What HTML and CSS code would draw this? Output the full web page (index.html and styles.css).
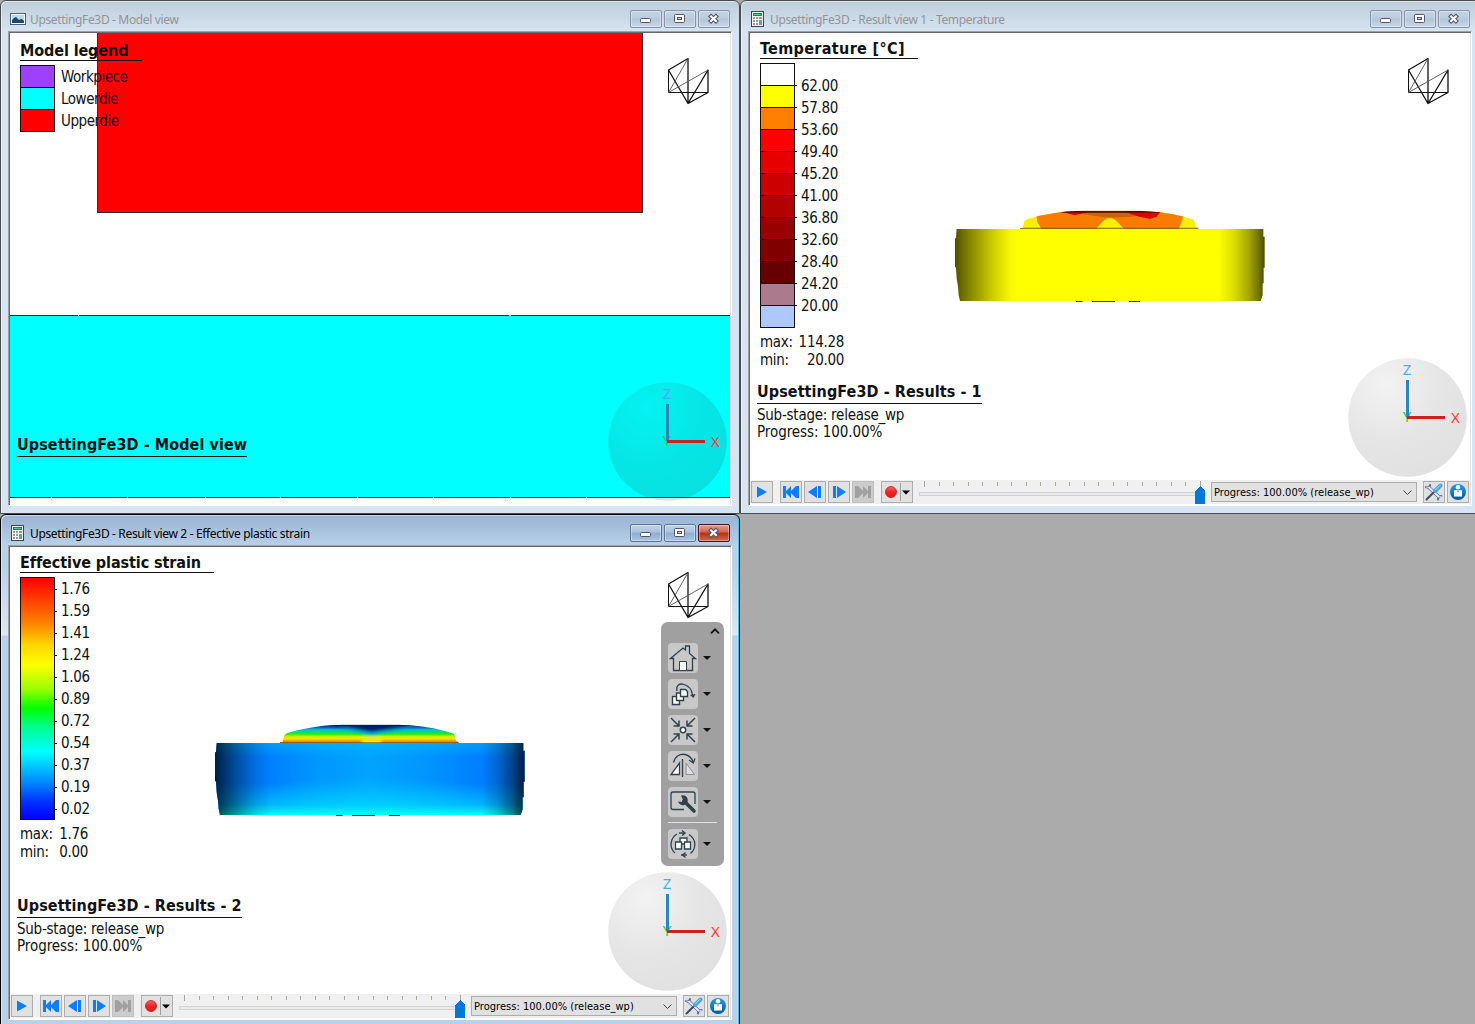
FILE: index.html
```html
<!DOCTYPE html>
<html lang="en">
<head>
<meta charset="utf-8">
<title>UpsettingFe3D</title>
<link rel="stylesheet" href="styles.css">
</head>
<body>
<svg class="defs" width="0" height="0" aria-hidden="true">
  <defs>
    <radialGradient id="ballShade" cx=".32" cy=".22" r=".8">
      <stop offset="0" stop-color="#3c3c3c" stop-opacity=".065"/>
      <stop offset=".6" stop-color="#323232" stop-opacity=".125"/>
      <stop offset="1" stop-color="#323232" stop-opacity=".145"/>
    </radialGradient>
    <linearGradient id="yellowBody">
      <stop offset="0" stop-color="#4c4c00"/><stop offset=".025" stop-color="#6e6e00"/><stop offset=".07" stop-color="#9a9a00"/>
      <stop offset=".12" stop-color="#cccc00"/><stop offset=".18" stop-color="#f8f800"/><stop offset=".2" stop-color="#ff0"/>
      <stop offset=".85" stop-color="#ff0"/><stop offset=".9" stop-color="#dede00"/><stop offset=".95" stop-color="#a4a400"/>
      <stop offset=".98" stop-color="#747400"/><stop offset="1" stop-color="#4c4c00"/>
    </linearGradient>
    <linearGradient id="blueBody">
      <stop offset="0" stop-color="#0078ff"/><stop offset=".18" stop-color="#0080ff"/><stop offset=".32" stop-color="#0096ff"/><stop offset=".5" stop-color="#00a4ff"/>
      <stop offset=".68" stop-color="#0096ff"/><stop offset=".84" stop-color="#0080ff"/><stop offset="1" stop-color="#0078ff"/>
    </linearGradient>
    <linearGradient id="cyanFoot" x2="0" y2="1">
      <stop offset="0" stop-color="#00c8ff" stop-opacity=".4"/><stop offset=".2" stop-color="#00c8ff" stop-opacity="0"/>
      <stop offset=".55" stop-color="#00d0ff" stop-opacity="0"/><stop offset=".85" stop-color="#00dcff" stop-opacity=".5"/><stop offset="1" stop-color="#00fff4"/>
    </linearGradient>
    <linearGradient id="edgeShade">
      <stop offset="0" stop-opacity=".75"/><stop offset=".03" stop-opacity=".57"/><stop offset=".08" stop-opacity=".32"/><stop offset=".13" stop-opacity=".12"/>
      <stop offset=".18" stop-opacity="0"/><stop offset=".86" stop-opacity="0"/><stop offset=".91" stop-opacity=".16"/><stop offset=".96" stop-opacity=".44"/><stop offset="1" stop-opacity=".78"/>
    </linearGradient>
    <linearGradient id="strainDome" x2="0" y2="1">
      <stop offset="0" stop-color="#002064"/><stop offset=".15" stop-color="#0058b8"/><stop offset=".28" stop-color="#00b8e0"/><stop offset=".42" stop-color="#00e070"/>
      <stop offset=".53" stop-color="#38ec00"/><stop offset=".66" stop-color="#d0f000"/><stop offset=".78" stop-color="#ffe000"/><stop offset=".9" stop-color="#ff9000"/><stop offset="1" stop-color="#d06800"/>
    </linearGradient>
    <radialGradient id="footGlow"><stop offset="0" stop-color="#00e0ff" stop-opacity=".7"/><stop offset=".5" stop-color="#00d8ff" stop-opacity=".35"/><stop offset="1" stop-color="#00d0ff" stop-opacity="0"/></radialGradient>
    <filter id="soft" x="-20%" y="-50%" width="140%" height="200%"><feGaussianBlur stdDeviation="5"/></filter>
    <path id="bodyShape" d="M50 102H970V125H974V218H971V265H968V300L962 318H60L56 300L54 275L50 250L48 218L45 215V130H48Z"/>
    <path id="domeShape" d="M240 102V99H248L253 78L262 72L295 63L340 55L365 51L425 47H597L660 52L700 58L735 66L762 74L768 95L776 99V102Z"/>
    <clipPath id="domeClip"><use href="#domeShape"/></clipPath>
    <clipPath id="bodyClip"><use href="#bodyShape"/></clipPath>
    <linearGradient id="recGrad" x2="0" y2="1"><stop offset="0" stop-color="#f46a6a"/><stop offset=".5" stop-color="#ee2424"/><stop offset="1" stop-color="#e01c1c"/></linearGradient>
    <linearGradient id="infoGrad" x2="0" y2="1"><stop offset="0" stop-color="#2d9bdc"/><stop offset="1" stop-color="#005a9e"/></linearGradient>
  </defs>
  <symbol id="i-picture" viewBox="0 0 16 12"><path fill="#4d5f70" d="M0 0h16v12H0z"/><path fill="#fff" d="M1 1h14v10H1z"/><path fill="#bcd8ee" d="M2 2h12v8H2z"/><path fill="#24456b" d="M2 7l2-2 2-1 3 3 2-1 1 0 2 2v2H2z"/></symbol>
  <symbol id="i-calc" viewBox="0 0 13 16"><path fill="#444" d="M0 0h13v16H0z"/><path fill="#f8f8f8" d="M1 1h11v14H1z"/><path fill="#118a50" d="M2 2h9v3H2z"/><path fill="#5cc795" d="M3 3h7v1H3z"/><path fill="#999" d="M2 6h2v2H2zM5 6h2v2H5zM2 9h2v2H2zM5 9h2v2H5zM2 12h2v2H2zM5 12h2v2H5z"/><path fill="#ff7a20" d="M8 6h3v2H8z"/><path fill="#5c9cd8" d="M8 9h3v5H8z"/></symbol>
  <symbol id="i-min" viewBox="0 0 32 18"><rect x="10.5" y="8.5" width="10" height="4" rx="1" fill="#fff" stroke="#53546a"/></symbol>
  <symbol id="i-max" viewBox="0 0 32 18"><rect x="10.5" y="4.5" width="10" height="8" rx="1" fill="#fff" stroke="#53546a"/><rect x="13.5" y="7.5" width="4" height="2" fill="#c3d3e6" stroke="#53546a"/></symbol>
  <symbol id="i-close" viewBox="0 0 32 18"><path d="M11.500 5l8 7.500M19.500 5l-8 7.500" stroke="#53546a" stroke-width="4.400"/><path d="M12.300 5.700l6.400 6M18.700 5.700l-6.400 6" stroke="#fff" stroke-width="2.200"/></symbol>
  <symbol id="i-logo" viewBox="0 0 42 48"><g fill="none" stroke="#111" stroke-linejoin="round"><path stroke-width="1.300" d="M1.500 13L21 1.500V46.500zM21 46.500L41 13V35.500z"/><path stroke-width="1" d="M1.500 13V35.500H41"/><path stroke="#555" stroke-width=".9" d="M1.500 35.500L21 1.500M1.500 35.500L41 13"/></g></symbol>
  <symbol id="i-play" viewBox="0 0 22 22"><path fill="#107cf8" d="M6 5.500L16 11L6 16.500z"/></symbol>
  <symbol id="i-first" viewBox="0 0 22 22"><path fill="currentColor" d="M3 5h3v5l5-5v5l5-5h3v12h-3l-5-5v5l-5-5v5H3z"/></symbol>
  <symbol id="i-prev" viewBox="0 0 22 22"><path fill="#107cf8" d="M4 11L13 5v12zM14 5h3v12h-3z"/></symbol>
  <symbol id="i-caret" viewBox="0 0 8 4"><path fill="#111" d="M0 0h8L4 4z"/></symbol>
  <symbol id="i-tools" viewBox="0 0 22 22"><g fill="none" stroke-linecap="round"><path d="M6 6.500L15.500 15.500" stroke="#5566ae" stroke-width="3.200"/><path d="M3 6l3 1 1-3M18.500 15l-3 .5-.5 3" stroke="#5566ae" stroke-width="2"/><path d="M6 6.500L15.500 15.500" stroke="#eef" stroke-width="1.800"/><path d="M3.500 6l2.700 .800M15.800 16l2.500-.6" stroke="#eef" stroke-width=".8"/><path d="M3.500 18.500L11 11" stroke="#3e4860" stroke-width="2"/><path d="M12 10L17.500 4.500" stroke="#4ba5e4" stroke-width="4"/><path d="M12.500 8.800l4.500-4.500" stroke="#a9dcff" stroke-width="1"/></g></symbol>
  <symbol id="i-info" viewBox="0 0 22 22"><circle cx="11" cy="11" r="8" fill="url(#infoGrad)"/><circle cx="11" cy="6.300" r="2.200" fill="#fff"/><path fill="#fff" d="M7 9.200h8v6.300H7z"/><path fill="#2b86c4" d="M10.500 9.200h1v2h-1z"/></symbol>
</svg>

<main class="desktop">
  <section class="window">
    <header class="titlebar">
      <svg class="ico-picture"><use href="#i-picture"/></svg><h1 class="caption">UpsettingFe3D - Model view</h1>
      <div class="controls"><button class="ctl"><svg><use href="#i-min"/></svg></button><button class="ctl"><svg><use href="#i-max"/></svg></button><button class="ctl"><svg><use href="#i-close"/></svg></button></div>
    </header>
    <div class="frame">
      <div class="viewport">
        <svg class="scene" viewBox="0 0 720 471" shape-rendering="crispEdges">
          <path fill="#f00" d="M87 0h546v180H87z"/><path fill="none" stroke="#40282c" d="M87.500 0V179.500H632.500V0"/>
          <path fill="#0ff" d="M0 282h720v183H0z"/>
          <path stroke="#134" d="M0 282.500H68M69 282.500H499M501 282.500H720M0 464.500H41M42 464.500H117M118 464.500H195M196 464.500H270M271 464.500H347M348 464.500H423M424 464.500H500M501 464.500H576M577 464.500H720"/>
        </svg>
        <div class="legend legend-model">
          <h2 class="legend-title">Model legend</h2>
          <ul class="swatches">
            <li><i class="sw violet"></i><span>Workpiece</span></li>
            <li><i class="sw cyan"></i><span>Lowerdie</span></li>
            <li><i class="sw red"></i><span>Upperdie</span></li>
          </ul>
        </div>
        <div class="info info-model"><h2>UpsettingFe3D - Model view</h2></div>
        <svg class="logo"><use href="#i-logo"/></svg>
        <svg class="triad" viewBox="0 0 120 120"><circle cx="59.500" cy="60.500" r="59.300" fill="url(#ballShade)"/><text class="axis" x="59" y="65" fill="#2fd02f">Y</text><path d="M59.500 23V60" stroke="#2a86c0" stroke-width="3"/><path d="M59 60.500H97" stroke="#cf2020" stroke-width="3"/><text class="axis" x="59" y="17.500" fill="#42b0ff">Z</text><text class="axis" x="107.500" y="65.500" fill="#ff3a3a">X</text></svg>
      </div>
    </div>
  </section>

  <section class="window">
    <header class="titlebar">
      <svg class="ico-calc"><use href="#i-calc"/></svg><h1 class="caption">UpsettingFe3D - Result view 1 - Temperature</h1>
      <div class="controls"><button class="ctl"><svg><use href="#i-min"/></svg></button><button class="ctl"><svg><use href="#i-max"/></svg></button><button class="ctl"><svg><use href="#i-close"/></svg></button></div>
    </header>
    <div class="frame">
      <div class="viewport">
        <svg class="scene" viewBox="0 0 720 447">
          <g transform="translate(190 162) scale(.33333)">
            <use href="#bodyShape" fill="url(#yellowBody)"/>
            <g clip-path="url(#domeClip)">
              <path fill="#f8f000" d="M230 40H790V110H230z"/>
              <path fill="#f87c00" d="M285 40L292 80L304 102H468L488 80Q509 58 532 80L552 102H716L730 66L740 40z"/>
              <path fill="#8a3c10" opacity=".4" d="M430 47H600V62Q515 74 430 58z"/>
              <path fill="#e00000" d="M365 47H445L440 53L405 61L385 56zM555 51H660L650 65L630 71L600 66z"/>
              <path fill="#640008" d="M365 45H660V53H600L560 53L440 53L365 53z"/>
              <path fill="#6a5a00" opacity=".7" d="M240 98H776V102H240z"/>
            </g>
            <path fill="#504800" d="M408 318h20v3h-20zM456 318h69v3h-69zM567 318h33v3h-33z"/>
          </g>
        </svg>
        <div class="legend">
          <h2 class="legend-title title-temp">Temperature [°C]</h2>
          <ul class="scale">
            <li><i class="sw t0"></i><span>62.00</span></li><li><i class="sw t1"></i><span>57.80</span></li>
            <li><i class="sw t2"></i><span>53.60</span></li><li><i class="sw t3"></i><span>49.40</span></li>
            <li><i class="sw t4"></i><span>45.20</span></li><li><i class="sw t5"></i><span>41.00</span></li>
            <li><i class="sw t6"></i><span>36.80</span></li><li><i class="sw t7"></i><span>32.60</span></li>
            <li><i class="sw t8"></i><span>28.40</span></li><li><i class="sw t9"></i><span>24.20</span></li>
            <li><i class="sw t10"></i><span>20.00</span></li><li><i class="sw t11"></i></li>
          </ul>
          <dl class="range range-temp"><dt>max:</dt><dd>114.28</dd><dt>min:</dt><dd>20.00</dd></dl>
        </div>
        <div class="info"><h2>UpsettingFe3D - Results - 1</h2><p>Sub-stage: release_wp</p><p class="progress">Progress: 100.00%</p></div>
        <svg class="logo"><use href="#i-logo"/></svg>
        <svg class="triad" viewBox="0 0 120 120"><circle cx="59.500" cy="60.500" r="59.300" fill="url(#ballShade)"/><text class="axis" x="59" y="65" fill="#2fd02f">Y</text><path d="M59.500 23V60" stroke="#2a86c0" stroke-width="3"/><path d="M59 60.500H97" stroke="#cf2020" stroke-width="3"/><text class="axis" x="59" y="17.500" fill="#42b0ff">Z</text><text class="axis" x="107.500" y="65.500" fill="#ff3a3a">X</text></svg>
      </div>
      <footer class="player">
        <button class="pb play"><svg><use href="#i-play"/></svg></button>
        <button class="pb"><svg><use href="#i-first"/></svg></button><button class="pb"><svg><use href="#i-prev"/></svg></button>
        <button class="pb flip"><svg><use href="#i-prev"/></svg></button><button class="pb flip off"><svg><use href="#i-first"/></svg></button>
        <button class="rec"><svg viewBox="0 0 32 22"><circle cx="10" cy="11" r="5.500" fill="url(#recGrad)" stroke="#c41818" stroke-width=".8"/><path stroke="#a0a0a0" d="M19.500 2v18"/><path d="M21 9.500h8l-4 4z"/></svg></button>
        <svg class="slider" viewBox="0 0 290 24"><path fill="#e7eaea" stroke="#d0d3d3" d="M.5 12.500H286V15.500H.5z"/><path class="ticks" d="M5.500 1v6M20.500 2v4M34.500 2v4M49.500 2v4M63.500 2v4M78.500 2v4M92.500 2v4M107.500 2v4M121.500 2v4M136.500 2v4M150.500 2v4M165.500 2v4M179.500 2v4M194.500 2v4M208.500 2v4M223.500 2v4M237.500 2v4M252.500 2v4M266.500 2v4M281.500 1v6"/><path fill="#0078d7" d="M276 24V11L281 6L286 11V24z"/></svg>
        <div class="combo"><span>Progress: 100.00% (release_wp)</span><svg viewBox="0 0 9 5"><path d="M.5.5l4 4 4-4" fill="none" stroke="#444"/></svg></div>
        <button class="pb tools"><svg><use href="#i-tools"/></svg></button><button class="pb"><svg><use href="#i-info"/></svg></button>
      </footer>
    </div>
  </section>

  <section class="window active">
    <header class="titlebar">
      <svg class="ico-calc"><use href="#i-calc"/></svg><h1 class="caption">UpsettingFe3D - Result view 2 - Effective plastic strain</h1>
      <div class="controls"><button class="ctl"><svg><use href="#i-min"/></svg></button><button class="ctl"><svg><use href="#i-max"/></svg></button><button class="ctl close"><svg><use href="#i-close"/></svg></button></div>
    </header>
    <div class="frame">
      <div class="viewport">
        <svg class="scene" viewBox="0 0 720 447">
          <g transform="translate(190 162) scale(.33333)">
            <use href="#bodyShape" fill="url(#blueBody)"/>
            <g clip-path="url(#bodyClip)">
              <ellipse cx="510" cy="330" rx="480" ry="130" fill="url(#footGlow)"/>
            </g>
            <use href="#bodyShape" fill="url(#cyanFoot)"/>
            <use href="#bodyShape" fill="url(#edgeShade)"/>
            <g clip-path="url(#domeClip)">
              <path fill="url(#strainDome)" d="M230 46H790V102H230z"/>
              <g filter="url(#soft)">
                <path fill="#00b4d8" d="M380 40H680L600 64L515 80L450 66z"/>
                <path fill="#00226c" d="M330 40H690L600 58L515 70L460 60z"/>
                <path fill="#f0e800" d="M485 84h60v22h-60z"/>
              </g>
              <path fill="#001c58" d="M365 45H660V50H365z"/>
              <path fill="#5a5a00" opacity=".6" d="M240 99H776V102H240z"/>
            </g>
            <path fill="#003850" d="M408 318h20v3h-20zM456 318h69v3h-69zM567 318h33v3h-33z"/>
          </g>
        </svg>
        <div class="legend">
          <h2 class="legend-title title-strain">Effective plastic strain</h2>
          <div class="ramp-row">
            <i class="ramp"></i>
            <ul class="ramp-labels"><li>1.76</li><li>1.59</li><li>1.41</li><li>1.24</li><li>1.06</li><li>0.89</li><li>0.72</li><li>0.54</li><li>0.37</li><li>0.19</li><li>0.02</li></ul>
          </div>
          <dl class="range range-strain"><dt>max:</dt><dd>1.76</dd><dt>min:</dt><dd>0.00</dd></dl>
        </div>
        <div class="info"><h2>UpsettingFe3D - Results - 2</h2><p>Sub-stage: release_wp</p><p class="progress">Progress: 100.00%</p></div>
        <svg class="logo"><use href="#i-logo"/></svg>
        <nav class="palette">
          <svg class="fold" viewBox="0 0 10 6"><path d="M1 5.300l4-4 4 4" fill="none" stroke="#111" stroke-width="1.700"/></svg>
          <div class="tool"><button><svg viewBox="0 0 30 30"><path fill="#c8c8c8" stroke="#2f424c" stroke-width="1.300" d="M2.500 15.500L15 5l2.500 2V3h4v7.500l6 5H24.500V27.500H5.500V15.500z"/><path fill="#fff" stroke="#2f424c" d="M11.500 27.500v-9h7v9z"/></svg></button><svg class="caret"><use href="#i-caret"/></svg></div>
          <div class="tool"><button><svg viewBox="0 0 30 30"><g fill="#fff" stroke="#2f424c" stroke-width="1.400"><path d="M4.500 17.500h5l2 2v6h-7z"/><path d="M8.500 14h5l2 2v5.500h-7z"/><path d="M12.500 10.500h5l2 2v5h-7z"/></g><path fill="none" stroke="#2f424c" stroke-width="1.300" d="M9 12C7.500 6 12 4 16 5.500C21 7 24 11 24.500 16"/><path fill="#2f424c" d="M22 16l5.500-1-2 4z"/></svg></button><svg class="caret"><use href="#i-caret"/></svg></div>
          <div class="tool"><button><svg viewBox="0 0 30 30"><g fill="none" stroke="#2f424c" stroke-width="1.500"><path d="M3 3l8 8M11 5.500V11H5.500M27 3l-8 8M19 5.500V11h5.500M3 27l8-8M11 24.500V19H5.500M27 27l-8-8M19 24.500V19h5.500"/><circle cx="15" cy="15" r="2.700" fill="#fff"/></g></svg></button><svg class="caret"><use href="#i-caret"/></svg></div>
          <div class="tool"><button><svg viewBox="0 0 30 30"><path fill="#fff" stroke="#2f424c" stroke-width="1.300" d="M11.500 12v11.500h-8.500z"/><path fill="#ddd" stroke="#8a9196" d="M18 12v11.500h8.500z"/><path stroke="#2f424c" stroke-width="1.300" d="M14.500 8v18"/><path fill="none" stroke="#2f424c" stroke-width="1.300" d="M5.500 11.500C7 5 12 2.500 17 3.500C21.500 4.500 24 7.500 25 11M21 9l4.300 3L27 7.500"/></svg></button><svg class="caret"><use href="#i-caret"/></svg></div>
          <div class="tool"><button><svg viewBox="0 0 30 30"><path fill="none" stroke="#2f424c" stroke-width="1.300" d="M16 22.500H5a2 2 0 0 1-2-2V7a2 2 0 0 1 2-2H25a2 2 0 0 1 2 2V17"/><path stroke="#2f424c" stroke-width="3.600" stroke-linecap="round" d="M16 14l10 10"/><path fill="#2f424c" d="M13 8.500a5 5 0 1 1-3 6l3.500.5 1.500-2z"/></svg></button><svg class="caret"><use href="#i-caret"/></svg></div>
          <hr>
          <div class="tool"><button><svg viewBox="0 0 30 30"><g fill="none" stroke="#2f424c" stroke-width="1.300"><path d="M9 5C2 9 1 19 7 24M11 4H17M21 5.500C28 10 29 19 22.500 24.500M13 26H19"/><path d="M14 1.500L17 4l-3 2.500M17.500 23.500L14.500 26l3 2.500"/><g fill="#fff"><path d="M12 9h7v6h-7z"/><path d="M7.500 13h6v7h-6zM16.500 13h6v7h-6z"/></g></g></svg></button><svg class="caret"><use href="#i-caret"/></svg></div>
        </nav>
        <svg class="triad" viewBox="0 0 120 120"><circle cx="59.500" cy="60.500" r="59.300" fill="url(#ballShade)"/><text class="axis" x="59" y="65" fill="#2fd02f">Y</text><path d="M59.500 23V60" stroke="#2a86c0" stroke-width="3"/><path d="M59 60.500H97" stroke="#cf2020" stroke-width="3"/><text class="axis" x="59" y="17.500" fill="#42b0ff">Z</text><text class="axis" x="107.500" y="65.500" fill="#ff3a3a">X</text></svg>
      </div>
      <footer class="player">
        <button class="pb play"><svg><use href="#i-play"/></svg></button>
        <button class="pb"><svg><use href="#i-first"/></svg></button><button class="pb"><svg><use href="#i-prev"/></svg></button>
        <button class="pb flip"><svg><use href="#i-prev"/></svg></button><button class="pb flip off"><svg><use href="#i-first"/></svg></button>
        <button class="rec"><svg viewBox="0 0 32 22"><circle cx="10" cy="11" r="5.500" fill="url(#recGrad)" stroke="#c41818" stroke-width=".8"/><path stroke="#a0a0a0" d="M19.500 2v18"/><path d="M21 9.500h8l-4 4z"/></svg></button>
        <svg class="slider" viewBox="0 0 290 24"><path fill="#e7eaea" stroke="#d0d3d3" d="M.5 12.500H286V15.500H.5z"/><path class="ticks" d="M5.500 1v6M20.500 2v4M34.500 2v4M49.500 2v4M63.500 2v4M78.500 2v4M92.500 2v4M107.500 2v4M121.500 2v4M136.500 2v4M150.500 2v4M165.500 2v4M179.500 2v4M194.500 2v4M208.500 2v4M223.500 2v4M237.500 2v4M252.500 2v4M266.500 2v4M281.500 1v6"/><path fill="#0078d7" d="M276 24V11L281 6L286 11V24z"/></svg>
        <div class="combo"><span>Progress: 100.00% (release_wp)</span><svg viewBox="0 0 9 5"><path d="M.5.5l4 4 4-4" fill="none" stroke="#444"/></svg></div>
        <button class="pb tools"><svg><use href="#i-tools"/></svg></button><button class="pb"><svg><use href="#i-info"/></svg></button>
      </footer>
    </div>
  </section>
</main>
</body>
</html>
```
FILE: styles.css
```css
* { box-sizing: border-box; }
html, body { height: 100%; }
body { margin: 0; overflow: hidden; background: #ababab; color: #111; font: 15px/18px "DejaVu Sans Condensed", "DejaVu Sans", sans-serif; font-stretch: condensed; }
h1, h2, p, ul, dl, dd { margin: 0; padding: 0; }
ul { list-style: none; }
button { display: block; padding: 0; border: 0; background: none; }
svg { display: block; }
.defs { position: absolute; }

.desktop { display: grid; grid-template-columns: 740px 740px; grid-template-rows: 514px 514px; width: 1475px; height: 1024px; overflow: hidden; }
.window { display: flex; flex-direction: column; padding: 0 7px 7px; border: 1px solid #4a4c51; border-radius: 6px 6px 0 0; background: linear-gradient(#bfcddb, #d7e4f2 31px); box-shadow: inset 1px 1px 0 rgba(255, 255, 255, .45); }
.window.active { border-color: #000; background: linear-gradient(#99b4d1, #b9d1ea 31px, #b9d1ea 50px, #dbe7f4 120px, #b9d1ea 121px); box-shadow: inset 1px 1px 0 rgba(255, 255, 255, .5), inset -1px 0 0 #3cc8f0; }
.titlebar { display: flex; align-items: center; flex: none; height: 30px; padding: 7px 2px 1px 2px; }
.caption { flex: 1; padding-top: 2px; font: 12px/18px "Noto Sans", sans-serif; letter-spacing: -.35px; color: #939495; white-space: nowrap; }
.active .caption { color: #000; }
.ico-picture { width: 16px; height: 12px; margin-right: 4px; }
.ico-calc { width: 13px; height: 16px; margin: 0 6px 0 1px; }
.controls { display: flex; gap: 2px; }
.ctl { width: 32px; height: 18px; border: 1px solid #8592ad; border-radius: 2px; background: linear-gradient(#c5d3e3, #bccbde 45%, #b3c5d9 50%, #c9d7e8); box-shadow: inset 0 0 0 1px rgba(255, 255, 255, .35); }
.ctl svg { width: 32px; height: 18px; margin: -1px; }
.active .ctl { border-color: #5f7396; background: linear-gradient(#c2d4ea, #a9c1dd 45%, #8fadcd 50%, #abc5e2); }
.active .ctl.close { border-color: #43141a; background: linear-gradient(#e3a095, #d0614e 45%, #b52f17 50%, #cf6a4c); }

.frame { flex: 1; display: flex; flex-direction: column; padding: 1px; border: 1px solid; border-color: #a0a0a0 #fff #fff #a0a0a0; background: #fff; box-shadow: inset 1px 1px 0 #696969, inset -1px 0 0 #e3e3e3; }
.viewport { position: relative; flex: 1; min-height: 0; overflow: hidden; }
.scene { position: absolute; inset: 0; width: 100%; height: 100%; }
.logo { position: absolute; left: 657px; top: 24px; width: 42px; height: 48px; }
.triad { position: absolute; left: 598px; bottom: 3px; width: 120px; height: 120px; }
.axis { font: 15px "Noto Sans", sans-serif; text-anchor: middle; }

.legend { position: absolute; left: 10px; top: 5px; }
.legend-model { top: 7px; }
.legend-title { width: 122px; height: 21px; border-bottom: 1px solid #111; font-size: 16px; line-height: 22px; font-weight: bold; letter-spacing: -.1px; white-space: nowrap; }
.title-temp { width: 158px; letter-spacing: .35px; }
.title-strain { width: 194px; letter-spacing: -.08px; }
.swatches, .scale { margin-top: 4px; }
.swatches li, .scale li { display: flex; align-items: flex-start; height: 22px; letter-spacing: -.3px; }
.swatches li { letter-spacing: -.45px; }
.sw { flex: none; width: 35px; height: 23px; border: 1px solid #111; }
.swatches span { margin: 3px 0 0 6px; }
.scale span { display: flex; align-items: center; height: 20px; margin-top: 13px; }
.scale span::before { content: ""; width: 2px; height: 1px; margin: -1px 4px 0 0; background: #111; }
.violet { background: #9f40ff; } .cyan { background: #0ff; } .red { background: #f00; }
.t0 { background: #fff; } .t1 { background: #ff0; } .t2 { background: #ff8000; } .t3 { background: #f00; }
.t4 { background: #e60000; } .t5 { background: #cc0000; } .t6 { background: #b30000; } .t7 { background: #990000; }
.t8 { background: #800000; } .t9 { background: #660000; } .t10 { background: #ab7a8c; } .t11 { background: #aec8ff; }
.ramp-row { display: flex; margin-top: 4px; height: 243px; }
.ramp { width: 35px; border: 1px solid #111; background: linear-gradient(#f00, #ff5a00 13%, #ff8c00 20%, #ffd800 28%, #ff0 36%, #9cff00 46%, #0f0 54%, #00ff90 62%, #0ff 72%, #0090ff 84%, #0030ff 93%, #00f); }
.ramp-labels { padding-top: 1px; }
.ramp-labels li { display: flex; align-items: center; height: 22px; letter-spacing: -.3px; }
.ramp-labels li::before { content: ""; width: 2px; height: 1px; margin-right: 4px; background: #111; }
.range { display: grid; grid-template-columns: 35px auto; justify-content: start; margin-top: 5px; line-height: 18px; letter-spacing: -.3px; text-align: right; }
.range dt { text-align: left; }
.range-temp { margin-top: 6px; grid-template-columns: 35px 49px; }
.range-strain { grid-template-columns: 35px 33px; }
.info { position: absolute; left: 7px; bottom: 39px; letter-spacing: -.25px; line-height: 17px; white-space: nowrap; }
.info h2 { display: inline-block; padding-bottom: 1px; border-bottom: 1px solid #111; margin-bottom: 3px; font-size: 16px; line-height: 20px; letter-spacing: .08px; }
.info .progress { letter-spacing: -.07px; }
.info-model { bottom: 44px; }

.palette { position: absolute; left: 651px; top: 75px; width: 63px; height: 244px; padding: 21px 7px 0; border-radius: 7px; background: #a0a0a0; }
.fold { position: absolute; right: 4px; top: 6px; width: 10px; height: 6px; }
.tool { display: flex; align-items: center; gap: 5px; height: 30px; margin-bottom: 6px; }
.tool button { width: 30px; height: 30px; border-radius: 4px; background: #c8c8c8; }
.tool button svg { width: 30px; height: 30px; }
.caret { width: 8px; height: 4px; }
.palette hr { width: 49px; height: 1px; margin: -1px 0 6px; border: 0; background: #e2e2e2; }

.player { display: flex; align-items: center; flex: none; height: 24px; padding: 0 1px; background: #f0f0f0; }
.pb, .rec { flex: none; width: 22px; height: 22px; margin-right: 2px; border: 1px solid #adadad; background: #e1e1e1; color: #107cf8; }
.pb svg { width: 22px; height: 22px; margin: -1px; }
.pb.play { margin-right: 7px; }
.flip svg { transform: scaleX(-1); }
.pb.off { margin-right: 7px; border-color: #bfbfbf; background: #ccc; color: #a0a0a0; }
.rec { width: 32px; margin-right: 6px; }
.rec svg { width: 32px; height: 22px; margin: -1px; }
.slider { flex: none; width: 290px; height: 24px; margin-right: 2px; shape-rendering: crispEdges; }
.ticks { stroke: #a8a89a; }
.combo { display: flex; align-items: center; justify-content: space-between; flex: none; width: 206px; height: 20px; margin-right: 6px; padding: 0 4px 0 2px; border: 1px solid #adadad; background: #e1e1e1; font-size: 11px; line-height: 18px; color: #000; }
.combo span { padding-top: 2px; letter-spacing: .03px; }
.combo svg { width: 9px; height: 5px; }
.pb:last-child { margin-right: 0; }
```
